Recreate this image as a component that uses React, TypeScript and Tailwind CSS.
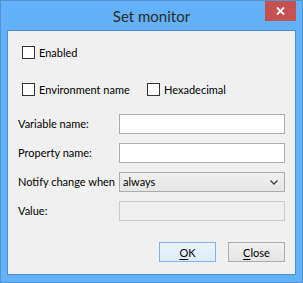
import React from "react";

function Check({ label, w }: { label: string; w?: string }) {
  return (
    <label className={"flex items-center gap-[4px] h-[13px] " + (w ?? "")}>
      <span className="w-[13px] h-[13px] border border-[#333333] bg-white shrink-0" />
      <span>{label}</span>
    </label>
  );
}

function Field({ label, children }: { label: string; children: React.ReactNode }) {
  return (
    <div className="flex items-center h-[20px]">
      <div className="w-[111px] pl-[10px] shrink-0 whitespace-nowrap">{label}</div>
      {children}
    </div>
  );
}

function Button({ label, focused }: { label: string; focused?: boolean }) {
  return (
    <button
      className={
        focused
          ? "w-[57px] h-[20px] border border-[#7eb4ea] bg-gradient-to-b from-[#ecf4fc] to-[#dcecfc] text-black leading-none"
          : "w-[57px] h-[20px] border border-[#acacac] bg-gradient-to-b from-[#f0f0f0] to-[#e5e5e5] text-black leading-none"
      }
    >
      <span className="underline underline-offset-2">{label[0]}</span>
      {label.slice(1)}
    </button>
  );
}

export default function App() {
  return (
    <div
      className="relative w-[303px] h-[283px] border border-[#4f93d3] bg-[#63b1f8] flex flex-col text-[11px] leading-[14px] text-black"
      style={{ fontFamily: "Lato, Arial, sans-serif" }}
    >
      <div className="h-[29px] flex items-center justify-center text-[15px] text-[#2b2b2b] pt-[1px]">
        Set monitor
      </div>
      <div className="absolute left-[264px] top-0 w-[31px] h-[20px] bg-[#c75050] flex items-center justify-center">
        <svg width="9" height="8" viewBox="0 0 9 8">
          <path d="M1 0.5 L8 7.5 M8 0.5 L1 7.5" stroke="white" strokeWidth="1.8" />
        </svg>
      </div>
      <div className="mx-[6px] h-[245px] border border-[#4a8fce] bg-[#f0f0f0] flex flex-col">
        <div className="pl-[14px] pt-[15px]">
          <Check label="Enabled" />
        </div>
        <div className="pl-[14px] mt-[24px] flex">
          <Check label="Environment name" w="w-[125px]" />
          <Check label="Hexadecimal" />
        </div>
        <div className="mt-[18px] flex flex-col gap-[9px]">
          <Field label="Variable name:">
            <div className="w-[166px] h-[20px] border border-[#abadb3] bg-white" />
          </Field>
          <Field label="Property name:">
            <div className="w-[166px] h-[20px] border border-[#abadb3] bg-white" />
          </Field>
          <Field label="Notify change when">
            <div className="w-[166px] h-[20px] border border-[#acacac] bg-gradient-to-b from-[#f0f0f0] to-[#e5e5e5] flex items-center justify-between pl-[3px] pr-[6px]">
              <span>always</span>
              <svg width="8" height="5" viewBox="0 0 8 5">
                <path d="M0.5 0.5 L4 4 L7.5 0.5" stroke="#444" strokeWidth="1.4" fill="none" />
              </svg>
            </div>
          </Field>
          <Field label="Value:">
            <div className="w-[166px] h-[20px] border border-[#cccccc] bg-[#f0f0f0]" />
          </Field>
        </div>
        <div className="mt-[21px] flex justify-end gap-[12px] pr-[10px]">
          <Button label="OK" focused />
          <Button label="Close" />
        </div>
      </div>
    </div>
  );
}
